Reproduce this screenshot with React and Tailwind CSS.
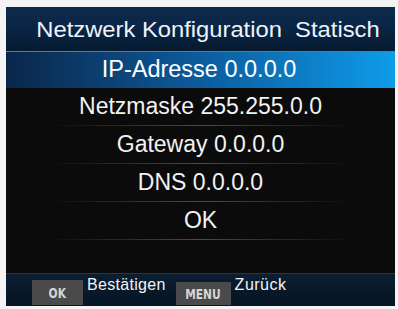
import React from "react";

// Netzwerk Konfiguration menu (camera OSD style)
const rows = [
  "Netzmaske 255.255.0.0",
  "Gateway 0.0.0.0",
  "DNS 0.0.0.0",
  "OK",
];

const Divider = () => (
  <div className="h-px mx-[40px] bg-gradient-to-r from-transparent via-[#3a4e62] to-transparent" />
);

const keyFont = { fontFamily: '"DejaVu Sans Condensed", "Liberation Sans Narrow", sans-serif' };

const App = () => {
  return (
    <div
      className="w-[398px] h-[309px] bg-[#f4f4f4] pt-[7px] pl-[6px]"
      style={{ fontFamily: '"Liberation Sans", Arial, sans-serif' }}
    >
      <div className="w-[389px] h-[299px] bg-[#0b0b0c] flex flex-col overflow-hidden">
        {/* Kopfzeile */}
        <div className="h-[44px] flex items-center justify-center pl-[15px] bg-gradient-to-b from-[#0c2b4c] via-[#0a2444] to-[#061a30] text-[#eef4fa] text-[22px]">
          <span className="inline-block scale-x-[1.08]">Netzwerk Konfiguration&nbsp;&nbsp;Statisch</span>
        </div>
        <div className="h-px bg-[#5f7b96]" />
        {/* ausgewählte Zeile */}
        <div className="h-[36px] flex items-center justify-center pr-[3px] text-white text-[23.5px] bg-gradient-to-r from-[#09264a] via-[#0b5c9e] to-[#0e9cea]">
          IP-Adresse 0.0.0.0
        </div>
        {rows.map((r) => (
          <div key={r}>
            <div className="h-[37px] flex items-center justify-center text-[#f2f2f2] text-[23px]">
              {r}
            </div>
            <Divider />
          </div>
        ))}
        <div className="flex-1" />
        {/* Fußzeile */}
        <div className="h-[33px] bg-gradient-to-b from-[#0b1e33] to-[#061423] border-t border-[#22384e] flex items-end pb-[1px] pl-[26px] text-[#f4f4f4] text-[16px]">
          <span
            className="w-[51px] h-[25px] bg-[#4a4a4a] text-[#d4d4d4] text-[14px] font-bold flex items-end justify-center pb-[1px]"
            style={keyFont}
          >
            <span className="inline-block scale-x-[0.85]">OK</span>
          </span>
          <span className="ml-[4px] self-start -mt-[1px] inline-block tracking-[0.3px]">Bestätigen</span>
          <span
            className="ml-[10px] w-[55px] h-[23px] bg-[#4a4a4a] text-[#d4d4d4] text-[14px] font-bold flex items-end justify-center"
            style={keyFont}
          >
            <span className="inline-block scale-x-[0.85]">MENU</span>
          </span>
          <span className="ml-[4px] self-start -mt-[1px] tracking-[0.5px]">Zurück</span>
        </div>
      </div>
    </div>
  );
};

export default App;
